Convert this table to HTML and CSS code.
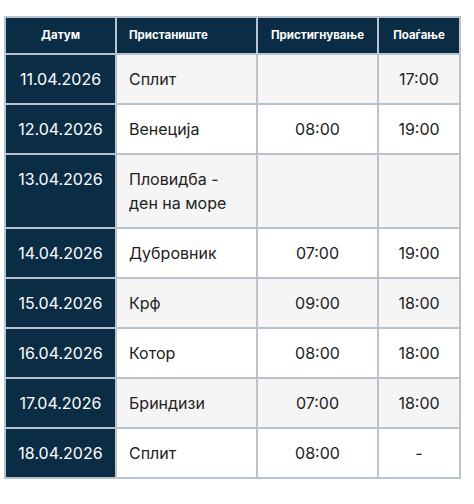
FILE: index.html
```html
<!DOCTYPE html>
<html lang="mk">
<head>
<meta charset="utf-8">
<link rel="stylesheet" href="styles.css">
</head>
<body>
<table class="sched">
  <colgroup>
    <col class="c1"><col class="c2"><col class="c3"><col class="c4">
  </colgroup>
  <thead>
    <tr>
      <th class="center">Датум</th>
      <th class="left">Пристаниште</th>
      <th class="center">Пристигнување</th>
      <th class="center">Поаѓање</th>
    </tr>
  </thead>
  <tbody>
    <tr><td class="date">11.04.2026</td><td class="port">Сплит</td><td class="time"></td><td class="time">17:00</td></tr>
    <tr><td class="date">12.04.2026</td><td class="port">Венеција</td><td class="time">08:00</td><td class="time">19:00</td></tr>
    <tr><td class="date">13.04.2026</td><td class="port">Пловидба -<br>ден на море</td><td class="time"></td><td class="time"></td></tr>
    <tr><td class="date">14.04.2026</td><td class="port">Дубровник</td><td class="time">07:00</td><td class="time">19:00</td></tr>
    <tr><td class="date">15.04.2026</td><td class="port">Крф</td><td class="time">09:00</td><td class="time">18:00</td></tr>
    <tr><td class="date">16.04.2026</td><td class="port">Котор</td><td class="time">08:00</td><td class="time">18:00</td></tr>
    <tr><td class="date">17.04.2026</td><td class="port">Бриндизи</td><td class="time">07:00</td><td class="time">18:00</td></tr>
    <tr><td class="date">18.04.2026</td><td class="port">Сплит</td><td class="time">08:00</td><td class="time">-</td></tr>
  </tbody>
</table>
</body>
</html>
```
FILE: styles.css
```css
html, body {
  margin: 0;
  padding: 0;
  background: #ffffff;
}
body {
  padding: 16px 4px;
  font-family: Inter, "Noto Sans", sans-serif;
  color: #222222;
}
.sched {
  border-collapse: collapse;
  table-layout: fixed;
  width: 455px;
  border: 2px solid #b9c3ce;
}
.c1 { width: 111px; }
.c2 { width: 141px; }
.c3 { width: 121px; }
.c4 { width: 82px; }
.sched th, .sched td {
  border: 2px solid #b9c3ce;
  vertical-align: top;
}
.sched th {
  background: #0b2c45;
  color: #ffffff;
  font-size: 11.5px;
  font-weight: 700;
  line-height: 15px;
  padding: 10px 12px;
  white-space: nowrap;
}
.sched th.center { text-align: center; padding-left: 4px; padding-right: 4px; }
.sched th.left { text-align: left; }
.sched td {
  font-size: 16px;
  line-height: 24px;
  padding: 12px 12px;
}
.sched tbody tr:nth-child(odd) td { background: #f5f5f5; }
.sched tbody tr:nth-child(even) td { background: #ffffff; }
.sched tbody tr td.date {
  background: #0b2c45;
  color: #ffffff;
  text-align: center;
}
.sched td.port { text-align: left; }
.sched td.time { text-align: center; }
```
